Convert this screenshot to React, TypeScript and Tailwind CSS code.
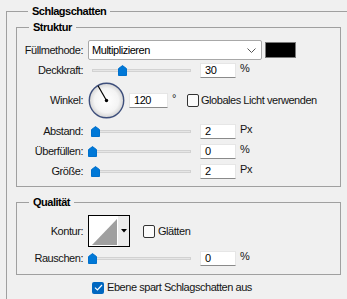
import React from "react";

function Thumb({ left }: { left: number }) {
  return (
    <svg className="absolute top-[2px]" style={{ left }} width="9" height="11" viewBox="0 0 9 11">
      <path d="M4.5 0.6 L8.5 3.6 V10.5 H0.5 V3.6 Z" fill="#0078d7" stroke="#0070cc" strokeWidth="1" strokeLinejoin="round" />
    </svg>
  );
}

function Slider({ value, max }: { value: number; max: number }) {
  const left = Math.round((value / max) * 99) - 0.5;
  return (
    <div className="relative w-[104px] h-[15px] shrink-0">
      <div className="absolute left-[4px] top-[6px] w-[99px] h-[3px] bg-[#e6e6e6] border border-[#d2d2d2]" />
      <Thumb left={left} />
    </div>
  );
}

function NumInput({ value, w }: { value: string; w: string }) {
  return (
    <div className={`${w} h-[15px] shrink-0 bg-white border border-[#e6e6e6] border-b-[#8a8a8a] pl-[4px] leading-[13px] text-black`}>
      {value}
    </div>
  );
}

function Label({ children }: { children: React.ReactNode }) {
  return <div className="w-[66px] shrink-0 text-right text-[#141414] leading-[13px]">{children}</div>;
}

function SliderRow({ label, value, max, display, unit }: { label: string; value: number; max: number; display: string; unit: string }) {
  return (
    <div className="flex items-center h-[15px]">
      <Label>{label}</Label>
      <div className="ml-[5px]">
        <Slider value={value} max={max} />
      </div>
      <div className="ml-[8px]">
        <NumInput value={display} w="w-[36px]" />
      </div>
      <span className="ml-[4px] self-start -mt-[1px] leading-[13px] text-[#141414]">{unit}</span>
    </div>
  );
}

function CheckBox() {
  return <div className="w-[12px] h-[13px] shrink-0 rounded-[2px] border border-[#333333] bg-[#fbfbfb]" />;
}

function Dial() {
  return (
    <svg width="37" height="37" viewBox="0 0 37 37" className="shrink-0">
      <defs>
        <radialGradient id="dg" cx="50%" cy="50%" r="50%">
          <stop offset="0%" stopColor="#ffffff" />
          <stop offset="70%" stopColor="#f4f4f4" />
          <stop offset="100%" stopColor="#d4d4d4" />
        </radialGradient>
      </defs>
      <circle cx="18.5" cy="18.5" r="17.2" fill="url(#dg)" stroke="#3e4f7c" strokeWidth="1.4" />
      <line x1="18.5" y1="18.5" x2="10" y2="3.8" stroke="#000" strokeWidth="1.2" />
      <circle cx="18.5" cy="18.5" r="1.7" fill="#000" />
    </svg>
  );
}

export default function App() {
  return (
    <div className="w-[347px] h-[299px] overflow-hidden bg-[#f0f0f0] font-['Liberation_Sans',Arial,sans-serif] text-[11px] tracking-[-0.45px] text-[#141414]">
      <fieldset className="ml-[6px] mt-[5px] w-[360px] h-[320px] border border-[#a0a0a0] pl-[9px] pt-[3px]">
        <legend className="ml-[12px] px-[4px] font-bold leading-[13px] tracking-[-0.5px] text-black">Schlagschatten</legend>

        <fieldset className="w-[325px] border border-[#a0a0a0] pt-[6px] pb-[7px]">
          <legend className="ml-[12px] px-[4px] font-bold leading-[13px] tracking-[-0.5px] text-black">Struktur</legend>

          {/* Füllmethode */}
          <div className="flex items-center h-[20px]">
            <Label>Füllmethode:</Label>
            <div className="ml-[5px] w-[174px] h-[20px] flex items-center justify-between bg-white border border-[#a8a8a8] rounded-[2px] pl-[3px] pr-[5px] text-black">
              <span className="leading-[13px]">Multiplizieren</span>
              <svg width="9" height="5" viewBox="0 0 9 5">
                <path d="M0.5 0.5 L4.5 4.5 L8.5 0.5" fill="none" stroke="#555" strokeWidth="1" />
              </svg>
            </div>
            <div className="ml-[3px] w-[31px] h-[16px] bg-black border border-[#7a7a7a]" />
          </div>

          <div className="h-[3px]" />
          <SliderRow label="Deckkraft:" value={30} max={100} display="30" unit="%" />

          {/* Winkel */}
          <div className="flex items-center h-[37px] mt-[4px]">
            <Label>Winkel:</Label>
            <div className="ml-[5px]">
              <Dial />
            </div>
            <div className="ml-[4px]">
              <NumInput value="120" w="w-[39px]" />
            </div>
            <span className="ml-[4px] self-start mt-[10px] leading-[13px]">°</span>
            <div className="ml-[11px]">
              <CheckBox />
            </div>
            <span className="ml-[2px] leading-[13px]">Globales Licht verwenden</span>
          </div>

          <div className="flex flex-col gap-[5px] mt-[5px]">
            <SliderRow label="Abstand:" value={2} max={73} display="2" unit="Px" />
            <SliderRow label="Überfüllen:" value={0} max={100} display="0" unit="%" />
            <SliderRow label="Größe:" value={2} max={73} display="2" unit="Px" />
          </div>
        </fieldset>

        <fieldset className="mt-[9px] w-[325px] border border-[#a0a0a0] pt-[6px] pb-[8px]">
          <legend className="ml-[12px] px-[4px] font-bold leading-[13px] tracking-[-0.5px] text-black">Qualität</legend>

          <div className="flex items-center h-[32px]">
            <Label>Kontur:</Label>
            <div className="ml-[5px] w-[42px] h-[32px] border border-black flex bg-white">
              <div className="w-[29px] h-full bg-white p-[1px]">
                <svg width="27" height="28" viewBox="0 0 27 28">
                  <polygon points="2,28 27,2 27,28" fill="#a0a0a0" />
                </svg>
              </div>
              <div className="flex-1 bg-[#ececec] flex items-center justify-center">
                <svg width="6" height="4" viewBox="0 0 6 4">
                  <polygon points="0,0 6,0 3,3.5" fill="#000" />
                </svg>
              </div>
            </div>
            <div className="ml-[13px]">
              <CheckBox />
            </div>
            <span className="ml-[3px] leading-[13px]">Glätten</span>
          </div>

          <div className="mt-[4px]">
            <SliderRow label="Rauschen:" value={0} max={100} display="0" unit="%" />
          </div>
        </fieldset>

        <div className="flex items-center mt-[6px] ml-[76px] h-[13px]">
          <div className="w-[12px] h-[12px] rounded-[2px] bg-[#0067c0] flex items-center justify-center">
            <svg width="9" height="7" viewBox="0 0 9 7">
              <path d="M1 3.6 L3.4 6 L8 1" fill="none" stroke="#fff" strokeWidth="1.2" />
            </svg>
          </div>
          <span className="ml-[3px] leading-[13px]">Ebene spart Schlagschatten aus</span>
        </div>
      </fieldset>
    </div>
  );
}
